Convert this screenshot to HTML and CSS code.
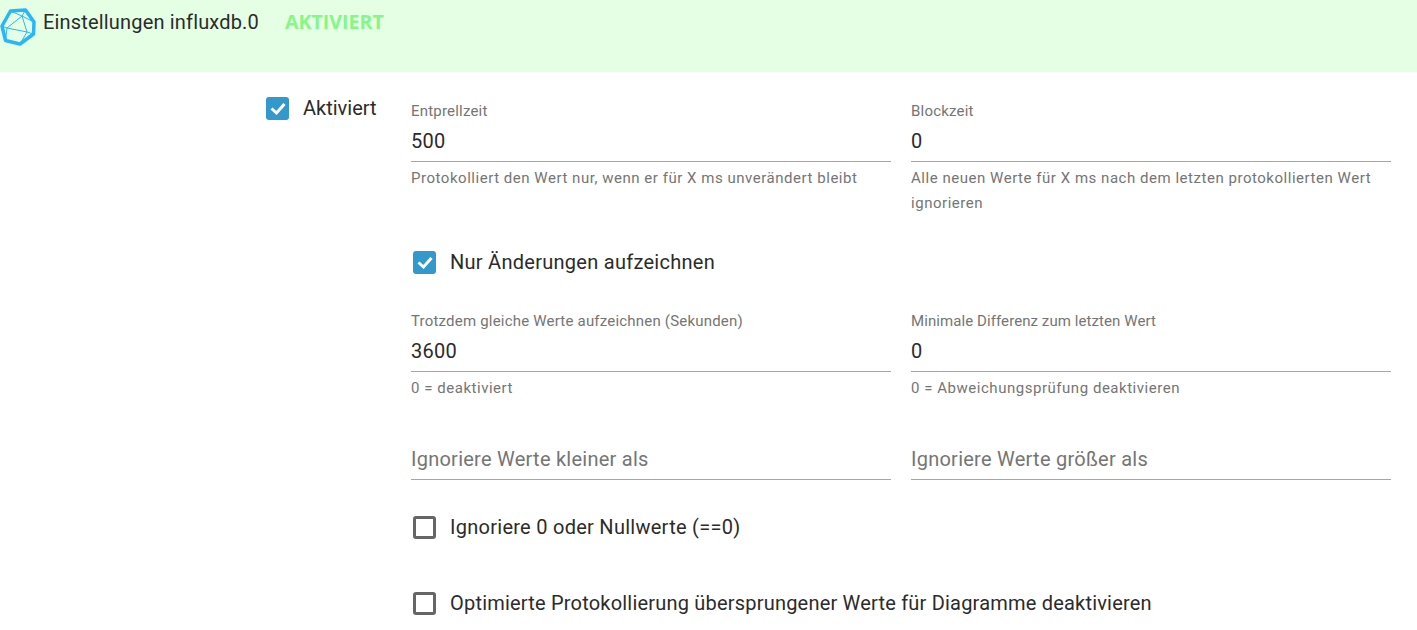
FILE: index.html
```html
<!DOCTYPE html>
<html lang="de">
<head>
<meta charset="utf-8">
<title>Einstellungen influxdb.0</title>
<link rel="stylesheet" href="styles.css">
</head>
<body>
<header class="head">
  <svg class="logo" viewBox="0 0 36 38" width="36" height="38">
    <path class="logo-outer" d="M10.5 3 L25.5 2 L34 14 L33.5 26 L20 36 L5.5 32.5 L2 18 Z"/>
    <path class="logo-inner" d="M10.5 3 L22 8 L25.5 2 M22 8 L34 14 M22 8 L27 24 L33.5 26 M27 24 L20 36 M27 24 L7 20 L22 8 M7 20 L2 18 M7 20 L5.5 32.5"/>
  </svg>
  <span class="title">Einstellungen influxdb.0</span>
  <span class="status">AKTIVIERT</span>
</header>
<main class="content">
  <div class="side">
    <label class="check">
      <span class="box on"><svg viewBox="0 0 22 22" width="22" height="22"><path d="M4.5 11.5 L9.5 16 L17.5 7"/></svg></span>
      <span class="check-label label-short">Aktiviert</span>
    </label>
  </div>
  <div class="form">
    <div class="row">
      <div class="field">
        <div class="f-label">Entprellzeit</div>
        <div class="f-value">500</div>
        <div class="f-help">Protokolliert den Wert nur, wenn er für X ms unverändert bleibt</div>
      </div>
      <div class="field">
        <div class="f-label">Blockzeit</div>
        <div class="f-value">0</div>
        <div class="f-help">Alle neuen Werte für X ms nach dem letzten protokollierten Wert ignorieren</div>
      </div>
    </div>
    <label class="check check-changes">
      <span class="box on"><svg viewBox="0 0 22 22" width="22" height="22"><path d="M4.5 11.5 L9.5 16 L17.5 7"/></svg></span>
      <span class="check-label label-wide">Nur Änderungen aufzeichnen</span>
    </label>
    <div class="row row-same">
      <div class="field">
        <div class="f-label">Trotzdem gleiche Werte aufzeichnen (Sekunden)</div>
        <div class="f-value">3600</div>
        <div class="f-help">0 = deaktiviert</div>
      </div>
      <div class="field">
        <div class="f-label f-label-tight">Minimale Differenz zum letzten Wert</div>
        <div class="f-value">0</div>
        <div class="f-help">0 = Abweichungsprüfung deaktivieren</div>
      </div>
    </div>
    <div class="row row-ignore">
      <div class="field">
        <div class="f-value f-placeholder">Ignoriere Werte kleiner als</div>
      </div>
      <div class="field">
        <div class="f-value f-placeholder">Ignoriere Werte größer als</div>
      </div>
    </div>
    <label class="check check-zero">
      <span class="box"></span>
      <span class="check-label label-wide">Ignoriere 0 oder Nullwerte (==0)</span>
    </label>
    <label class="check check-opt">
      <span class="box"></span>
      <span class="check-label">Optimierte Protokollierung übersprungener Werte für Diagramme deaktivieren</span>
    </label>
  </div>
</main>
</body>
</html>
```
FILE: styles.css
```css
html, body {
  margin: 0;
  padding: 0;
  background: #fff;
  overflow: hidden;
}
body {
  height: 630px;
  font-family: Roboto, "Liberation Sans", sans-serif;
  color: #2b2b2b;
}
.head {
  height: 72px;
  box-sizing: border-box;
  background: #e5ffe5;
  display: flex;
  align-items: flex-start;
  padding-top: 6px;
}
.logo {
  flex: none;
  margin: 2px 7px 0 0;
}
.logo-outer {
  fill: none;
  stroke: #29b6f6;
  stroke-width: 3.5;
  stroke-linejoin: round;
}
.logo-inner {
  fill: none;
  stroke: #29b6f6;
  stroke-width: 1;
}
.title {
  font-size: 20px;
  line-height: 32px;
  letter-spacing: 0.17px;
  color: #2b2b2b;
}
.status {
  margin-left: 26px;
  font-family: "Open Sans", sans-serif;
  font-weight: 700;
  font-size: 19.6px;
  line-height: 32px;
  color: #86f686;
}
.content {
  display: flex;
  padding-left: 265px;
}
.side {
  width: 146px;
  flex: none;
  padding-top: 24px;
}
.form {
  width: 980px;
  flex: none;
  padding-top: 29px;
}
.check {
  display: flex;
  align-items: center;
  height: 24px;
}
.box {
  width: 23px;
  height: 23px;
  box-sizing: border-box;
  border: 3px solid #666;
  border-radius: 3px;
  flex: none;
  margin: 0 14px 0 1px;
  display: block;
}
.box.on {
  border: none;
  background: #3399cc;
}
.box svg {
  display: block;
  margin: 0.5px;
}
.box path {
  fill: none;
  stroke: #fff;
  stroke-width: 3;
}
.check-label {
  font-size: 20px;
  line-height: 24px;
  letter-spacing: 0.2px;
  color: #2b2b2b;
}
.label-short {
  letter-spacing: 0;
}
.label-wide {
  letter-spacing: 0.27px;
}
.row {
  display: grid;
  grid-template-columns: 480px 480px;
  column-gap: 20px;
}
.f-label {
  font-size: 15px;
  line-height: 20px;
  letter-spacing: 0.2px;
  color: #757575;
}
.f-label-tight {
  letter-spacing: 0.08px;
}
.f-value {
  font-size: 20px;
  line-height: 38px;
  height: 38px;
  padding-bottom: 1px;
  border-bottom: 1px solid #a6a6a6;
  margin-top: 1px;
  letter-spacing: 0.25px;
  color: #2b2b2b;
}
.f-help {
  font-size: 15px;
  line-height: 25px;
  letter-spacing: 0.53px;
  color: #757575;
  margin-top: 4px;
}
.f-placeholder {
  color: #757575;
}
.check-changes {
  margin-top: 34px;
  margin-left: 1px;
}
.row-same {
  margin-top: 37px;
}
.row-ignore {
  margin-top: 38px;
}
.check-zero {
  margin-top: 35px;
  margin-left: 1px;
}
.check-opt {
  margin-top: 52px;
  margin-left: 1px;
}
```
